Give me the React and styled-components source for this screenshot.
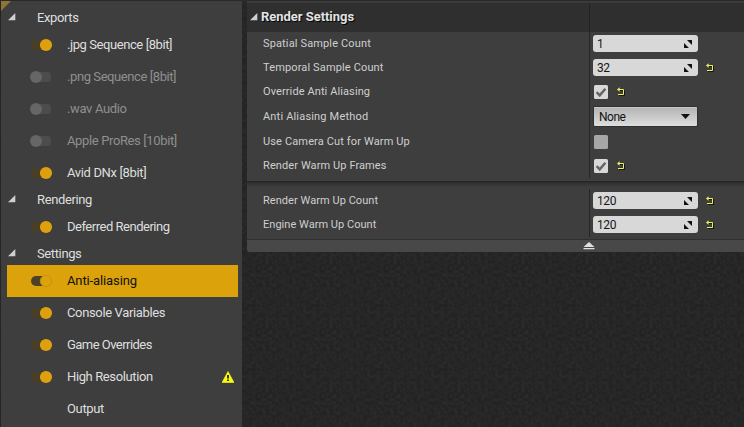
import React from "react";
import styled, { createGlobalStyle } from "styled-components";

const grain = `url("data:image/svg+xml,${encodeURIComponent(
  '<svg xmlns="http://www.w3.org/2000/svg" width="64" height="64"><filter id="n" x="0" y="0" width="100%" height="100%"><feTurbulence type="fractalNoise" baseFrequency="0.3" numOctaves="2" seed="4" stitchTiles="stitch"/><feColorMatrix values="0 0 0 0 0.3  0 0 0 0 0.3  0 0 0 0 0.3  0.15 0 0 0 -0.04"/></filter><rect width="64" height="64" filter="url(#n)"/></svg>'
)}")`;

const GlobalStyle = createGlobalStyle`
  * { box-sizing: border-box; }
  body { margin: 0; background: #232323; overflow: hidden; }
`;

const Window = styled.div`
  width: 744px;
  height: 427px;
  display: grid;
  grid-template-columns: 241px 497px;
  column-gap: 5px;
  padding-left: 1px;
  overflow: hidden;
  background: ${grain} #222222;
  font-family: Roboto, "Liberation Sans", sans-serif;
  border-top: 1px solid #2a2a2a;
`;

const Sidebar = styled.nav`
  position: relative;
  height: 426px;
  padding: 6px 4px 0 6px;
  background: #3e3e3e;
`;

const CornerFlag = styled.svg`
  position: absolute;
  left: 0;
  top: 0;
`;

const GroupRow = styled.div`
  height: 22px;
  display: flex;
  align-items: center;
  gap: 21px;
  padding: 0 0 1px 1px;
  color: #dedede;
  font-size: 13px;
  letter-spacing: -0.38px;
`;

const ArrowIcon = styled.svg`
  margin-top: -1px;
  flex: none;
`;

const Item = styled.div`
  height: 32px;
  display: flex;
  align-items: center;
  padding: 0 4px 0 23px;
  background: ${(p) => (p.$selected ? "#dca20b" : "transparent")};
  color: ${(p) => (p.$selected ? "#111" : p.$off ? "#8f8f8f" : "#dedede")};
  font-size: 13px;
`;

const ItemText = styled.span`
  flex: 1;
  margin-left: 14px;
  padding-bottom: 1px;
  white-space: nowrap;
  letter-spacing: ${(p) => p.$spacing}px;
`;

const ToggleSlot = styled.span`
  width: 23px;
  height: 14px;
  flex: none;
`;

const Details = styled.main`
  display: flex;
  flex-direction: column;
  align-items: stretch;
  border-top: 2px solid #3b3b3b;
`;

const Header = styled.header`
  height: 29px;
  display: grid;
  grid-template-columns: 343px 1fr;
  background: #2f2f2f;
`;

const HeaderTitle = styled.div`
  display: flex;
  align-items: center;
  gap: 3px;
  padding: 0 0 2px 3px;
  border-right: 1px solid #222;
  color: #e2e2e2;
  font-size: 13px;
  font-weight: 700;
  letter-spacing: -0.04px;
  text-shadow: 1px 1px 0 #050505;

  ${ArrowIcon} {
    margin-top: 1px;
  }
`;

const Section = styled.section`
  background: #3e3e3e;
  padding-bottom: ${(p) => p.$bottom}px;
  padding-top: ${(p) => p.$top || 0}px;
  background-image: ${(p) =>
    p.$top ? "linear-gradient(#242424, #303030 2px, #3e3e3e 6px)" : "none"};
`;

const Property = styled.div`
  height: ${(p) => p.$height || 24}px;
  display: grid;
  grid-template-columns: 343px 1fr;
`;

const Label = styled.label`
  display: flex;
  align-items: center;
  padding: 0 0 1px 16px;
  border-right: 1px solid #252525;
  color: #cfcfcf;
  font-size: 11px;
  letter-spacing: ${(p) => p.$spacing}px;
  white-space: nowrap;
`;

const Value = styled.div`
  display: flex;
  align-items: center;
  padding-left: ${(p) => (p.$boxed ? 4 : 3)}px;
`;

const SpinBox = styled.div`
  width: 105px;
  height: 17px;
  margin-bottom: 1px;
  display: flex;
  align-items: center;
  justify-content: space-between;
  padding: 0 5px 0 4px;
  border-radius: 3px;
  background: #d8d8d8;
  color: #161616;
  font-size: 12px;
  letter-spacing: -0.4px;
`;

const CheckBox = styled.div`
  width: 14px;
  height: 14px;
  display: flex;
  border-radius: 1.5px;
  background: ${(p) => (p.$checked ? "#d9d9d9" : "#a7a7a7")};
`;

const Combo = styled.div`
  width: 103px;
  height: 19px;
  margin-bottom: 1px;
  display: flex;
  align-items: center;
  justify-content: space-between;
  padding: 0 7px 0 5px;
  border-radius: 1px;
  background: linear-gradient(#b2b2b2, #dedede);
  box-shadow: 0 0 0 1px #303030, inset 0 1px 0 #c8c8c8;
  color: #111;
  font-size: 12px;
  letter-spacing: -0.5px;
`;

const ResetIcon = styled.svg`
  margin-left: ${(p) => p.$gap}px;
  margin-top: -1px;
`;

const Footer = styled.footer`
  height: 13px;
  padding-left: 336px;
  border-top: 1px solid #303030;
  border-radius: 0 0 0 2px;
  background: #484848;
  display: flex;
  align-items: center;
`;

function Toggle({ state }) {
  if (state === "none") return <ToggleSlot />;
  const shapes = {
    on: (
      <>
        <rect x="2" y="2" width="16" height="10" rx="3" fill="#4a3f25" />
        <circle cx="16" cy="7" r="6.1" fill="#dea00d" />
      </>
    ),
    off: (
      <>
        <rect x="3" y="2" width="18" height="10" rx="3.5" fill="#4c4c4c" />
        <circle cx="6" cy="7" r="6" fill="#666" />
      </>
    ),
    selected: (
      <>
        <rect x="1" y="2" width="17" height="10" rx="5" fill="#4b4028" />
        <circle cx="16" cy="7" r="5.7" fill="#dca20b" stroke="#c98f12" strokeWidth=".9" />
      </>
    ),
  };
  return (
    <ToggleSlot as="svg" viewBox="0 0 23 14">
      {shapes[state]}
    </ToggleSlot>
  );
}

function Warning() {
  return (
    <svg width="12" height="12" viewBox="0 0 12 12">
      <path d="M6 0.5 12 11.5H0Z" fill="#fbfb10" stroke="#fbfb10" strokeWidth=".6" strokeLinejoin="round" />
      <path d="M5 4h2v3.6H5zM5 8.5h2v1.5H5z" fill="#34341c" />
    </svg>
  );
}

function Arrow() {
  return (
    <ArrowIcon width="8" height="8" viewBox="0 0 8 8">
      <path d="M7.3 0V7.3H0Z" fill="#cfcfcf" />
    </ArrowIcon>
  );
}

function Reset({ gap }) {
  return (
    <ResetIcon $gap={gap} width="9" height="9" viewBox="0 0 9 9">
      <path d="M2 3.5H7.5V8.5H2" fill="none" stroke="#17170a" />
      <path d="M1 2.5H6.5V7.5H1" fill="none" stroke="#eaf060" />
      <path d="M0 2.5 2.6 .2V4.8Z" fill="#eaf060" />
    </ResetIcon>
  );
}

function Spin({ value }) {
  return (
    <SpinBox>
      <span>{value}</span>
      <svg width="10" height="10" viewBox="0 0 10 10">
        <path d="M4 1H9V6ZM1 4 6 9H1Z" fill="#111" />
      </svg>
    </SpinBox>
  );
}

function Check({ checked }) {
  return (
    <CheckBox $checked={checked}>
      {checked && (
        <svg width="14" height="14" viewBox="0 0 14 14">
          <path d="M2.6 7.2 5.7 10.3 11.4 3.8" fill="none" stroke="#666" strokeWidth="2.5" />
        </svg>
      )}
    </CheckBox>
  );
}

const groups = [
  {
    name: "Exports",
    items: [
      { name: ".jpg Sequence [8bit]", state: "on", spacing: -0.42 },
      { name: ".png Sequence [8bit]", state: "off", spacing: -0.42 },
      { name: ".wav Audio", state: "off", spacing: -0.35 },
      { name: "Apple ProRes [10bit]", state: "off", spacing: -0.37 },
      { name: "Avid DNx [8bit]", state: "on", spacing: -0.35 },
    ],
  },
  {
    name: "Rendering",
    items: [{ name: "Deferred Rendering", state: "on", spacing: -0.48 }],
  },
  {
    name: "Settings",
    items: [
      { name: "Anti-aliasing", state: "selected", spacing: -0.12 },
      { name: "Console Variables", state: "on", spacing: -0.36 },
      { name: "Game Overrides", state: "on", spacing: -0.54 },
      { name: "High Resolution", state: "on", spacing: -0.38, warn: true },
      { name: "Output", state: "none", spacing: -0.35 },
    ],
  },
];

function Row({ name, spacing = 0.14, height, boxed, children }) {
  return (
    <Property $height={height}>
      <Label $spacing={spacing}>{name}</Label>
      <Value $boxed={boxed}>{children}</Value>
    </Property>
  );
}

export default function App() {
  return (
    <Window>
      <GlobalStyle />
      <Sidebar>
        <CornerFlag width="11" height="11" viewBox="0 0 11 11">
          <path d="M0 0H10L0 10Z" fill="#8b7538" />
        </CornerFlag>
        {groups.map((g) => (
          <React.Fragment key={g.name}>
            <GroupRow>
              <Arrow />
              {g.name}
            </GroupRow>
            {g.items.map(({ name, state, spacing, warn }) => (
              <Item key={name} $selected={state === "selected"} $off={state === "off"}>
                <Toggle state={state} />
                <ItemText $spacing={spacing}>{name}</ItemText>
                {warn && <Warning />}
              </Item>
            ))}
          </React.Fragment>
        ))}
      </Sidebar>
      <Details>
        <Header>
          <HeaderTitle>
            <Arrow />
            Render Settings
          </HeaderTitle>
        </Header>
        <Section $bottom={3}>
          <Row name="Spatial Sample Count"><Spin value="1" /></Row>
          <Row name="Temporal Sample Count"><Spin value="32" /><Reset gap={8} /></Row>
          <Row name="Override Anti Aliasing" spacing={0.1} boxed><Check checked /><Reset gap={9} /></Row>
          <Row name="Anti Aliasing Method" spacing={0.18} height={26} boxed>
            <Combo>
              <span>None</span>
              <svg width="9" height="5" viewBox="0 0 9 5"><path d="M0 0H9L4.5 5Z" fill="#111" /></svg>
            </Combo>
          </Row>
          <Row name="Use Camera Cut for Warm Up" boxed><Check /></Row>
          <Row name="Render Warm Up Frames" spacing={0.1} boxed><Check checked /><Reset gap={9} /></Row>
        </Section>
        <Section $top={8} $bottom={2}>
          <Row name="Render Warm Up Count" spacing={0.05}><Spin value="120" /><Reset gap={8} /></Row>
          <Row name="Engine Warm Up Count" spacing={0.03}><Spin value="120" /><Reset gap={8} /></Row>
        </Section>
        <Footer>
          <svg width="12" height="8" viewBox="0 0 12 8">
            <path d="M6 0 11.5 5H.5ZM.5 6H11.5V7.3H.5Z" fill="#e0e0e0" />
          </svg>
        </Footer>
      </Details>
    </Window>
  );
}
